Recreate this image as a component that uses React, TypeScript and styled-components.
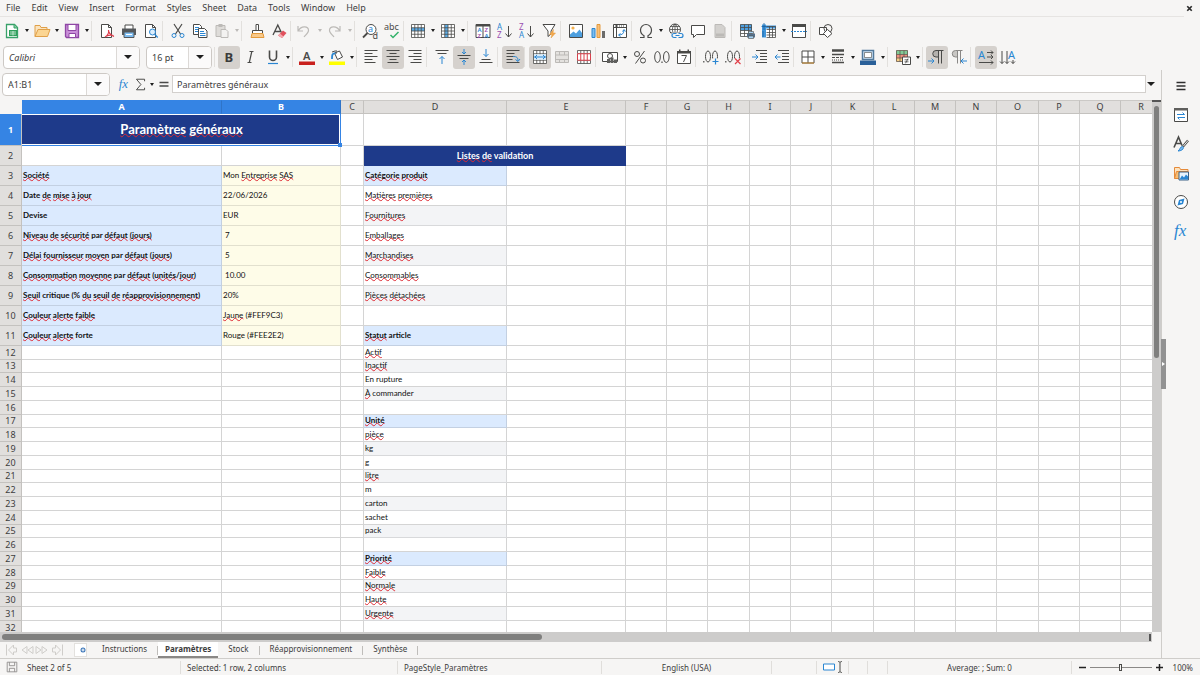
import React from 'react';
import styled, { createGlobalStyle, css } from 'styled-components';

const ui = '"Noto Sans", "Open Sans", sans-serif';
const cellFont = 'Lato, "Open Sans", sans-serif';
const ink = '#3d3d3d';
const blue = '#3584e4';
const navy = '#1e3a8a';

const Global = createGlobalStyle`
  *, *::before, *::after { box-sizing: border-box; }
  body { margin: 0; font-family: ${ui}; font-size: 9px; color: ${ink}; background: #f6f5f4; }
  button, input { font: inherit; color: inherit; margin: 0; }
  button { border: 0; padding: 0; background: none; }
`;

/* ---------- icons ---------- */

const g = '#4a4a48';
const b = '#2a86d2';
const p = '#9a4fb0';
const o = '#e39a3c';
const off = '#bcbab7';

const Svg = styled.svg`
  display: block;
  flex: none;
  fill: none;
  overflow: visible;
`;

const grid = (c: string) => <path d="M1.500 1.500h13v13h-13zM1.500 4.750h13M1.500 8h13M1.500 11.250h13M4.750 1.500v13M8 1.500v13M11.250 1.500v13" stroke={c} strokeWidth=".8" />;

const icons: Record<string, React.ReactNode> = {
  new: <><path d="M2.500 1.500h8l3 3v10h-11z" stroke="#38a169" fill="#fff" strokeWidth="1.300" /><path d="M10 1.500v3.500h3.500" stroke="#38a169" fill="#7fd09c" /><path d="M5 7h8v6H5z" fill="#2f9e5b" /><path d="M6 9h6M6 11h6M9 8v4.500" stroke="#d6f1e0" strokeWidth=".8" /></>,
  open: <><path d="M1 13.500V2.500h5l1 2h6v2" fill="#fbe3bd" stroke="#e0a049" /><path d="M1 13.500l3-7h12l-2.500 7z" fill="#fbd592" stroke="#e0a049" /></>,
  save: <><path d="M1.500 1.500h13v13h-12l-1-1z" fill="#c98fd8" stroke="#8f47a5" strokeWidth="1.300" /><path d="M4 1.500h8v6H4z" fill="#fff" stroke="#8f47a5" /><path d="M5 10.500h6.500v4H5z" fill="#fff" stroke="#8f47a5" /></>,
  pdf: <><path d="M2.500 1.500h7l3 3v10h-10z" fill="#fff" stroke={g} /><path d="M9.500 1.500v3h3" stroke={g} /><path d="M6 14c3-2 4-5 3.500-7M9.500 7c0 3 2 5 5.500 6.500M6.500 13.500c3-1.500 5-2 8-1" stroke="#dd3b4a" strokeWidth="1.200" /></>,
  print: <><path d="M4 6V2h8v4" fill="#fff" stroke={g} /><path d="M1 5.500h14v6.500H1z" fill="#55585b" /><path d="M3 9h10v5.500H3z" fill="#7fbdf0" stroke="#55585b" /><path d="M5 11.500h6" stroke="#fff" /></>,
  preview: <><path d="M2.500 1.500h7l3 3v10h-10z" fill="#fff" stroke={g} /><path d="M9.500 1.500v3h3" stroke={g} /><circle cx="9.500" cy="9" r="3" fill="#dceefc" stroke={b} /><path d="M11.700 11.300l3 3.200" stroke={b} strokeWidth="1.300" /></>,
  cut: <><path d="M4 1l6.500 10M12 1L5.500 11" stroke={g} strokeWidth="1.200" /><circle cx="4" cy="12.500" r="2" stroke={b} /><circle cx="12" cy="12.500" r="2" stroke={b} /></>,
  copy: <><path d="M1.500 1.500h6l2 2v8h-8z" fill="#fff" stroke={g} /><path d="M3 4.500h4M3 6.500h4M3 8.500h3" stroke={b} /><path d="M6.500 5.500h6l2.500 2.500v6.500H6.500z" fill="#fff" stroke={g} /><path d="M8 8.500h4M8 10.500h5.500M8 12.500h5.500" stroke={b} /></>,
  paste: <><path d="M2 2.500h9v11H2z" fill="#dedcd9" stroke={off} /><path d="M4.500 1h4v3h-4z" fill={off} /><path d="M7 6.500h5l2 2v6H7z" fill="#f3f2f1" stroke={off} /></>,
  clone: <><path d="M7 7.500V1.500h2.500v6" stroke={g} fill="#fff" /><path d="M3.500 10.500V7.500h10v3z" stroke={g} fill="#fff" /><path d="M3 10.500h11l1 4H2z" fill="#f8c98a" stroke={o} /></>,
  clear: <><path d="M2 12L6.800 2l3.600 7.500M3.800 8.500h6" stroke={g} strokeWidth="1.300" /><path d="M7 12.500l5-5 3.500 2.500-4.500 5z" fill="#e0505c" /><path d="M7 12.500l2-2 3.500 3-1.500 1.500z" fill="#f4a6ac" /></>,
  undo: <path d="M1 3v5h5M1.500 7.500C4 3 11 2.500 11.500 7c.3 2.500-2.500 4.500-4.500 7" stroke={off} strokeWidth="1.200" />,
  redo: <path d="M13 3v5H8M12.500 7.500C10 3 3 2.500 2.500 7c-.3 2.500 2.500 4.500 4.500 7" stroke={off} strokeWidth="1.200" />,
  find: <><circle cx="9" cy="6.500" r="5" stroke={g} fill="#fff" /><path d="M5.500 10L1 14.500" stroke={g} strokeWidth="1.800" /><text x="6" y="9" fontSize="9" fill={b} fontFamily="Noto Sans">a</text><text x="10.500" y="15.500" fontSize="9" fill={g} fontFamily="Noto Sans">d</text></>,
  spell: <><text x="0" y="7" fontSize="9" fill={g} fontFamily="Noto Sans">abc</text><path d="M6.500 12l2.500 2.500 5.500-5.500" stroke="#34b36b" strokeWidth="1.500" /></>,
  row: <><path d="M1 1.500h14v13H1z" fill="#fff" /><path d="M1 4.750h14V8H1z" fill="#5eaee8" />{grid(g)}</>,
  col: <><path d="M1 1.500h14v13H1z" fill="#fff" /><path d="M4.750 1.500H8v13H4.750z" fill="#5eaee8" />{grid(g)}</>,
  sort: <><path d="M1 1.500h14v13H1zM8 1.500v13" fill="#fff" stroke={g} /><path d="M1 1h14v2.500H1z" fill={g} /><g fontFamily="Noto Sans" fontSize="6" fontWeight="600"><text x="2.500" y="9" fill={b}>A</text><text x="2.500" y="14.500" fill={p}>Z</text><text x="9.500" y="9" fill={p}>Z</text><text x="9.500" y="14.500" fill={b}>A</text></g></>,
  asc: <><g fontFamily="Noto Sans" fontSize="8"><text x="0" y="6.500" fill={b}>A</text><text x="0" y="15" fill={p}>Z</text></g><path d="M11.500 3v11M8.500 10.500l3 3.500 3-3.500" stroke={g} /></>,
  desc: <><g fontFamily="Noto Sans" fontSize="8"><text x="0" y="6.500" fill={p}>Z</text><text x="0" y="15" fill={b}>A</text></g><path d="M11.500 3v11M8.500 10.500l3 3.500 3-3.500" stroke={g} /></>,
  filter: <><path d="M2 1.500h12L10 8v3l-3 2.500V8z" fill="#fff" stroke={g} /><path d="M12.500 6.500l-4 5h2.500l-1 3.500 4.500-5h-2.500z" fill="#f3a84d" stroke={o} strokeWidth=".5" /></>,
  image: <><path d="M1.500 1.500h13v13h-13z" fill="#fff" stroke={g} /><circle cx="5" cy="5" r="1.600" fill="#f3b04d" /><path d="M2 14v-2.500l3.500-3 2.500 2 3.500-4L14 10v4z" fill="#4d9fdf" /></>,
  chart: <><path d="M2 5.500h3v9H2z" fill="#7dbdee" stroke={b} /><path d="M7 1.500h3v13H7z" fill="#f9c07a" stroke={o} /><path d="M12 8h3v7h-3z" fill="#6b6b69" /></>,
  pivot: <><path d="M1.500 1.500h13v13h-13zM1.500 4.500h13M4.500 1.500v13" fill="#fff" stroke={g} /><path d="M3 3h10" stroke={g} strokeDasharray="1 1" /><path d="M7 12c3 0 5-1.500 5-5M10.500 8.500L12 6.500l1.500 2M8.500 10.500L6.500 12l2 1.500" stroke={b} /></>,
  omega: <path d="M2 14.500h4v-1.800C3.800 11.500 2.500 9.500 2.500 7a5.500 5.500 0 0 1 11 0c0 2.500-1.300 4.500-3.500 5.700v1.800h4" stroke={g} strokeWidth="1.200" />,
  link: <><circle cx="7" cy="6.500" r="5.500" fill="#fff" stroke={g} /><path d="M1.500 6.500h11M7 1v11M2.500 3.500h9M2.500 9.500h9M7 1c-3.500 3-3.500 8 0 11M7 1c3.500 3 3.500 8 0 11" stroke={g} strokeWidth=".8" /><path d="M3.500 9.500h12v6h-12z" fill="#f6f5f4" /><path d="M8.500 14.500H6a2 2 0 0 1 0-4h2.500M10.500 10.500H13a2 2 0 0 1 0 4h-2.500M7.500 12.500h4" stroke={b} strokeWidth="1.200" /></>,
  comment: <path d="M1.500 2.500h13v9h-8l-3 3v-3h-2z" fill="#fff" stroke={g} />,
  header: <><path d="M3 1.500h7l3 3v10H3z" fill="#d3d1ce" stroke={off} /><path d="M4 10.500h8v3H4z" fill={off} /></>,
  printArea: <><path d="M1 1.500h12v13H1z" fill="#fff" /><path d="M1 1.500h12v6H1z" fill="#4d9fdf" /><path d="M1.500 1.500h11v12h-11zM1.500 4.500h11M1.500 7.500h11M1.500 10.500h11M5.500 1.500v12M9.500 1.500v12" stroke={g} strokeWidth=".8" /><path d="M8 10.500h8v4H8z" fill="#55708a" /><path d="M9.500 8.500h5v2h-5zM9.500 13h5v2.500h-5z" fill="#a5d2f4" stroke={g} strokeWidth=".6" /></>,
  freeze: <><path d="M1 3.500h14v11H1z" fill="#fff" /><path d="M1 1.500h4v13H1zM5 2.500h10v3H5z" fill="#3f95da" /><path d="M5.500 3.500h9v11h-9M5.500 6.500h9M5.500 9.500h9M5.500 12h9M8.500 3.500v11M11.500 3.500v11" stroke={g} strokeWidth=".8" /><path d="M3 0v7M.5 3.500h5M2 8v6" stroke="#1c5f9c" strokeWidth=".8" /></>,
  split: <><path d="M1.500 1.500h13v13h-13z" fill="#fff" stroke={g} /><path d="M1 1h14v3H1z" fill={g} /><path d="M0 8.500h16" stroke={b} strokeDasharray="2 1" /></>,
  shapes: <><path d="M1.500 4.500h7v7h-7z" fill="#fff" stroke={g} /><circle cx="10" cy="5.500" r="4" stroke={g} /><path d="M9.500 6.500l4.500 4-4.500 4-4-4z" fill="#fff" stroke={g} /></>,
  bold: <text x="3.500" y="13" fontSize="13" fontWeight="700" fill="#3b3b3a" fontFamily="Noto Sans">B</text>,
  italic: <path d="M6.500 2.500h4M4.500 13.500h4M8.800 2.500L6.300 13.500" stroke={g} strokeWidth="1.200" />,
  underline: <><path d="M4.500 1.500V8a3.500 3.500 0 0 0 7 0V1.500" stroke={g} strokeWidth="1.600" /><path d="M3 14.500h10" stroke={b} strokeWidth="1.200" /></>,
  fontColor: <><text x="4" y="10.500" fontSize="11" fontWeight="600" fill={g} fontFamily="Noto Sans">A</text><path d="M0 12.500h16V16H0z" fill="#c9211e" /></>,
  highlight: <><path d="M5.500 4l5-2 3 6-5 2.500z" fill="#fff" stroke={g} /><path d="M7 1v4M3 3l3-1" stroke={g} /><path d="M3 10c0-4 0-6 3.500-5.500" stroke={b} strokeWidth="1.800" /><path d="M0 12.500h16V16H0z" fill="#ffff00" /></>,
  left: <path d="M1.500 1.500h13M1.500 4.500h8M1.500 7.500h13M1.500 10.500h8M1.500 13.500h11" stroke={g} />,
  center: <path d="M1.500 1.500h13M4.500 4.500h7M1.500 7.500h13M4.500 10.500h7M2.500 13.500h11" stroke={g} />,
  right: <path d="M1.500 1.500h13M6.500 4.500h8M1.500 7.500h13M6.500 10.500h8M3.500 13.500h11" stroke={g} />,
  top: <><path d="M1.500 1.500h13M3.500 4.500h9" stroke={g} /><path d="M8 15V7.500M5.500 10L8 7.500l2.500 2.500" stroke={b} /></>,
  middle: <><path d="M1.500 6.500h13M3.500 9.500h9" stroke={g} /><path d="M8 0v5M6 3l2 2 2-2M8 16v-5M6 13l2-2 2 2" stroke={b} /></>,
  bottom: <><path d="M3.500 10.500h9M1.500 13.500h13" stroke={g} /><path d="M8 0v7.500M5.500 5L8 7.500 10.500 5" stroke={b} /></>,
  wrap: <><path d="M1.500 1.500h13M1.500 4.500h8M1.500 7.500h8M1.500 10.500h6M1.500 13.500h13" stroke={g} /><path d="M8 7.500c4 0 5 1 5 4.500M10.500 10.500l2.500 2 2-2.500" stroke={b} /></>,
  merge: <><path d="M1 1.500h14v13H1z" fill="#fff" />{grid(g)}<path d="M2 5.200h12v5.600H2z" fill="#d9ecfa" /><path d="M2 8h12M5 6L3 8l2 2M11 6l2 2-2 2" stroke={b} /></>,
  mergeOff: <><path d="M1.500 2.500h13v11h-13zM1.500 6h13M1.500 10.500h13M5.500 2.500V6M10.500 2.500V6M5.500 10.500v3M10.500 10.500v3" fill="#e4e2df" stroke={off} /></>,
  unmerge: <><path d="M1 1.500h14v13H1z" fill="#fff" />{grid(g)}<path d="M1 4.750h14v6.500H1z" fill="#fff" /><path d="M1.500 4.750h13v6.500h-13zM4.750 4.750v6.500M8 4.750v6.500M11.250 4.750v6.500" stroke="#d8424d" /></>,
  currency: <><path d="M.5 3.500h15v9H.5z" fill="#fff" stroke={g} /><circle cx="8" cy="7" r="2.500" stroke={g} /><path d="M5 10h3v4H5zM8.500 8.500h3V14h-3zM12 10.500h3V14h-3z" fill="#5f5f5d" /></>,
  percent: <><circle cx="5" cy="5" r="2.500" stroke={g} /><circle cx="11" cy="11.500" r="2.500" stroke={g} /><path d="M12.500 2L3.500 14.500" stroke={g} /></>,
  number: <><ellipse cx="3.500" cy="8" rx="2.800" ry="5.500" stroke={g} /><ellipse cx="12.300" cy="8" rx="2.800" ry="5.500" stroke={g} /><path d="M8 12.500v1.500" stroke={g} strokeWidth="1.200" /></>,
  date: <><path d="M1.500 2.500h13v12h-13z" fill="#fff" stroke={g} /><path d="M1 2h14v2.500H1zM3 .5h1.500v2H3zM11.500.5H13v2h-1.500z" fill={g} /><path d="M5.500 6.500h5l-3 6.500" stroke={g} /></>,
  addDec: <><path d="M.8 12v1.500" stroke={g} strokeWidth="1.200" /><ellipse cx="5" cy="7.500" rx="2.500" ry="5.500" stroke={g} /><ellipse cx="12" cy="7.500" rx="2.500" ry="5.500" stroke={g} /><path d="M9 9.500h8v6H9z" fill="#f6f5f4" /><path d="M12.500 9.500v6M9.500 12.500h6" stroke={b} strokeWidth="1.200" /></>,
  delDec: <><path d="M.8 12v1.500" stroke={g} strokeWidth="1.200" /><ellipse cx="5" cy="7.500" rx="2.500" ry="5.500" stroke={g} /><ellipse cx="12" cy="7.500" rx="2.500" ry="5.500" stroke={g} /><path d="M9 9.500h8v6H9z" fill="#f6f5f4" /><path d="M10 9.500l5.500 5.500M15.500 9.500L10 15" stroke="#e0404a" strokeWidth="1.200" /></>,
  indent: <><path d="M4 1.500h11M8 4.500h7M8 7.500h7M8 10.500h7M4 13.500h11" stroke={g} /><path d="M0 8h5.500M3.500 5.500L6 8l-2.500 2.500" stroke={b} /></>,
  outdent: <><path d="M4 1.500h11M8 4.500h7M8 7.500h7M8 10.500h7M4 13.500h11" stroke={g} /><path d="M6.500 8H1M3.500 5.500L1 8l2.500 2.500" stroke={b} /></>,
  borders: <><path d="M2 2h12v12H2z" fill="#fff" stroke={g} /><path d="M8 2v12M2 8h12" stroke={g} /><path d="M2 14h12" stroke="#c98a2b" /></>,
  lineStyle: <><path d="M2 1.500h12" stroke={g} strokeWidth="2.500" /><path d="M2 5.500h12" stroke={g} strokeWidth="1.500" /><path d="M2 8.500h12" stroke={g} strokeDasharray="3 1" /><path d="M2 11h12" stroke={g} strokeDasharray="1 1" /><path d="M2 13.500h12" stroke={g} strokeWidth="1.500" /></>,
  borderColor: <><path d="M2.500 1.500h11v9h-11z" fill="#cfe5f8" stroke="#51799b" strokeWidth="1.500" /><path d="M4.500 3.500h7v5h-7z" fill="#fff" stroke={g} strokeWidth=".6" /><path d="M0 11.500h16v4.500H0z" fill="#2a6099" /></>,
  conditional: <><path d="M1 1.500h12v4H1z" fill="#7fcb96" /><path d="M1 5.500h12v3.500H1z" fill="#ef8f7f" /><path d="M1 9h12v3.500H1z" fill="#f7cf86" /><path d="M1.500 1.500h11v11h-11zM1.500 5.500h11M1.500 9h11M5 1.500v11M9 1.500v11" stroke="#66594f" strokeWidth=".8" /><path d="M7.500 8h8v7.500h-8z" fill="#fff" stroke={g} /><path d="M9.500 10.800h4M9.500 12.800h4M13 9.500l-2.500 4.800" stroke={g} strokeWidth=".8" /></>,
  ltr: <><path d="M9.500 1.500v13M12.500 1.500v13" stroke={g} /><path d="M9.500 1.500H7a3 3 0 0 0 0 6.500h2.500z" fill="#b5b2ae" stroke={g} /><path d="M9 1.500h5.500" stroke={g} /><path d="M-1 12h5.500M2.500 9.500L5 12l-2.500 2.500" stroke={b} /></>,
  rtl: <><path d="M6.500 1.500v13M9.500 1.500v13M6 1.500h5.500" stroke="#8a8886" /><path d="M6.500 1.500H4.500a3 3 0 0 0 0 6.500h2z" fill="#c9c7c4" stroke="#8a8886" /><path d="M16 12h-5.500M12.500 9.500L10 12l2.500 2.500" stroke={b} /></>,
  dirH: <><text x="0" y="10" fontSize="11" fill={b} fontFamily="Noto Sans">A</text><path d="M9 3.500h6M9 8h6M1 13.500h14M13 1.500l2 2-2 2M13 6l2 2-2 2M13 11.500l2 2-2 2" stroke={g} /></>,
  dirV: <><text x="8" y="10" fontSize="11" fill={b} fontFamily="Noto Sans">A</text><path d="M2 2v12.500M7 2v12.500M13 11v3.500M0 12.500l2 2 2-2M5 12.500l2 2 2-2M11 12.500l2 2 2-2" stroke={g} /></>,
  fx: <text x="1" y="13" fontSize="17" fontStyle="italic" fill={b} fontFamily="Liberation Serif">fx</text>,
  sum: <path d="M13 4V1.500H3L8.500 8 3 14.500h10V12" stroke={g} strokeWidth="1.200" />,
  equals: <path d="M3.500 6.500h9M3.500 10h9" stroke={g} strokeWidth="1.500" />,
  menu: <path d="M3.500 4.500h9M3.500 8h9M3.500 11.500h9" stroke="#2e2e2e" strokeWidth="1.300" />,
  props: <><path d="M1.500 1.500h13v13h-13z" fill="#fff" stroke={g} /><path d="M1 1h14v2.500H1z" fill="#5f5f5d" /><path d="M4 7.500h7.500M5 10.500H12M9.500 5.500l2 2M6.500 12.500l-2-2" stroke={b} /></>,
  styles: <><path d="M1 11.500L5.500 1 9 9.500M2.500 7.500H8" stroke={g} strokeWidth="1.600" /><path d="M15 4.500l-5 6" stroke={g} strokeWidth="2.400" /><path d="M15 4.500l-4.500 5.500" stroke="#fff" strokeWidth=".9" /><path d="M5 15c2-1 2-4.500 4.500-4.500C12 12 9 15 5 15z" fill="#7fbcf0" stroke={b} /></>,
  gallery: <><path d="M1.500 13.500V2.500h5l1 2h7.500v3" fill="#fde2bd" stroke="#e58a3a" /><path d="M1.500 13.500l2-7H15v7z" fill="#f8bd73" stroke="#e58a3a" /><path d="M6 7h9.500v8H6z" fill="#e8f4fd" stroke="#3c6385" /><path d="M6.500 14.500l2.500-4 2 2 2-3 2 2v3z" fill={b} /></>,
  navigator: <><circle cx="8" cy="8" r="6.500" fill="#fff" stroke={g} /><path d="M11.500 4.500l-1.500 5.500-5.500 1.500L6 6z" fill={b} /><circle cx="8" cy="8" r="1" fill="#fff" /></>,
  docSave: <path d="M2.500 2.500h11v11h-11zM5 2.500v4h6v-4M5 13.500v-4h6v4" stroke="#8e8c8a" />,
  close: <path d="M4 4l8 8M12 4l-8 8" stroke="#2b2b2b" strokeWidth="3" />,
};

const Icon = ({ name, size = 16 }: { name: string; size?: number }) => (
  <Svg width={size} height={size} viewBox="0 0 16 16" aria-hidden="true">{icons[name]}</Svg>
);

const Caret = styled.span<{ $big?: boolean; $off?: boolean }>`
  width: 0;
  height: 0;
  border: solid transparent;
  border-width: ${({ $big }) => ($big ? '4px 4px 0' : '3px 2px 0')};
  border-top-color: ${({ $off }) => ($off ? off : '#1f1f1f')};
`;

/* ---------- window chrome ---------- */

const Window = styled.div`
  display: flex;
  flex-direction: column;
  height: 100vh;
  overflow: hidden;
`;

const MenuBar = styled.nav`
  display: flex;
  align-items: center;
  gap: 11px;
  height: 17px;
  flex: none;
  margin-right: 16px;
  padding-left: 6px;
  border-bottom: 1px solid #e6e4e2;
`;

const MenuItem = styled.button`
  line-height: 16px;
`;

const CloseButton = styled.button`
  position: absolute;
  top: 4px;
  right: 6px;
`;

const ToolBar = styled.div<{ $format?: boolean }>`
  display: flex;
  align-items: center;
  height: ${({ $format }) => ($format ? '26px' : '27px')};
  flex: none;
  padding-left: ${({ $format }) => ($format ? '3px' : '1px')};
`;

const FontFields = styled.div`
  display: flex;
  gap: 6px;
  margin-right: 2px;
`;

const Tool = styled.button<{ $on?: boolean }>`
  display: flex;
  align-items: center;
  justify-content: center;
  width: 22px;
  height: 23px;
  flex: none;
  border-radius: 3px;
  background: ${({ $on }) => ($on ? '#d5d1cd' : 'transparent')};
`;

const Arrow = styled.button`
  display: flex;
  align-items: center;
  justify-content: center;
  width: 8px;
  height: 23px;
  flex: none;
`;

const Separator = styled.span<{ $tight?: boolean }>`
  width: ${({ $tight }) => ($tight ? '4px' : '5px')};
  height: 20px;
  flex: none;
  border-left: 1px solid #e2e0dd;
`;

const Combo = styled.div<{ $width: number; $italic?: boolean }>`
  display: flex;
  flex: none;
  width: ${({ $width }) => $width}px;
  height: 23px;
  border: 1px solid #cdc9c5;
  border-radius: 4px;
  background: #fff;
  overflow: hidden;
  input {
    flex: 1;
    min-width: 0;
    border: 0;
    padding: 0 5px;
    background: transparent;
    outline: 0;
    font-style: ${({ $italic }) => ($italic ? 'italic' : 'normal')};
  }
  button {
    display: flex;
    align-items: center;
    justify-content: center;
    width: 23px;
    border-left: 1px solid #dcd9d6;
    background: #fbfafa;
  }
`;

const Body = styled.div`
  display: flex;
  flex: 1;
  min-height: 0;
`;

const Main = styled.main`
  display: flex;
  flex-direction: column;
  flex: 1;
  min-width: 0;
`;

const FormulaBar = styled.div`
  display: flex;
  align-items: center;
  flex: none;
  height: 30px;
  padding: 0 5px 2px 2px;
`;

const FormulaTools = styled.div`
  display: flex;
  margin-left: 6px;
`;

const FormulaInput = styled.input`
  flex: 1;
  min-width: 0;
  height: 18px;
  padding: 0 4px;
  border: 1px solid #d3d0cd;
  background: #fff;
  outline: 0;
`;

const FormulaTool = styled(Tool)`
  width: 16px;
`;

const FormulaExpand = styled(Arrow)`
  width: 10px;
`;

const SideBar = styled.aside`
  position: relative;
  display: flex;
  flex-direction: column;
  align-items: center;
  gap: 6px;
  width: 39px;
  flex: none;
  padding-top: 4px;
  border-left: 1px solid #cfcdca;
`;

const SideHandle = styled.button`
  position: absolute;
  top: 50%;
  left: -1px;
  display: flex;
  align-items: center;
  justify-content: center;
  width: 5px;
  height: 50px;
  margin-top: -25px;
  background: #929292;
  &::after {
    content: '';
    border: solid transparent;
    border-width: 2px 0 2px 3px;
    border-left-color: #fff;
  }
`;

/* ---------- sheet ---------- */

const SheetArea = styled.div`
  display: flex;
  flex: 1;
  min-height: 0;
`;

const SheetView = styled.div`
  flex: 1;
  min-width: 0;
  overflow: hidden;
  background: #fff;
`;

const Sheet = styled.table`
  table-layout: fixed;
  width: 0;
  border-collapse: separate;
  border-spacing: 0;
`;

const Corner = styled.td`
  background: #f6f5f4;
`;

const head = css<{ $on?: boolean }>`
  padding: 0;
  font-size: 9px;
  line-height: 12px;
  text-align: center;
  background: ${({ $on }) => ($on ? blue : '#e1dfdd')};
  color: ${({ $on }) => ($on ? '#fff' : ink)};
  font-weight: ${({ $on }) => ($on ? 700 : 400)};
`;

const ColHead = styled.th<{ $on?: boolean }>`
  ${head}
  height: 14px;
  border-right: 1px solid ${({ $on }) => ($on ? '#2f74c8' : '#c4c2bf')};
  border-top: 1px solid ${({ $on }) => ($on ? blue : '#cbc9c6')};
  border-bottom: 1px solid ${({ $on }) => ($on ? blue : '#c4c2bf')};
`;

const RowHead = styled.th<{ $on?: boolean }>`
  ${head}
  border-right: 1px solid #c4c2bf;
  border-bottom: 1px solid #c4c2bf;
`;

const SheetRow = styled.tr<{ $height: number }>`
  height: ${({ $height }) => $height}px;
`;

type Kind = 'plain' | 'label' | 'value' | 'stripe' | 'banner';
const fills: Record<Kind, string> = {
  plain: 'transparent', label: '#dbeafe', value: '#fefce8', stripe: '#f3f4f6', banner: navy,
};

const Cell = styled.td<{ $kind?: Kind }>`
  padding: 0 0 1px 1px;
  border: solid rgba(0, 0, 0, ${({ $kind = 'plain' }) => ($kind === 'plain' ? 0.17 : 0.11)});
  border-width: 0 1px 1px 0;
  background: ${({ $kind = 'plain' }) => fills[$kind]};
  font-family: ${cellFont};
  font-size: 8px;
  line-height: 11px;
  white-space: pre;
  color: #111;
  ${({ $kind }) => $kind === 'label' && 'font-weight: 700;'}
  ${({ $kind }) => $kind === 'banner' && `font-size: 9px; font-weight: 700; color: #fff; text-align: center; border-color: ${navy};`}
`;

const TitleCell = styled(Cell)`
  position: relative;
  font-size: 13px;
  line-height: 18px;
  border-right-color: ${blue};
  border-bottom-color: ${blue};
  &::before {
    content: '';
    position: absolute;
    inset: 0;
    border: 1px solid #fff;
    border-left: 0;
  }
  &::after {
    content: '';
    position: absolute;
    right: -2px;
    bottom: -2px;
    width: 4px;
    height: 4px;
    background: ${blue};
  }
`;

const Misspelt = styled.span`
  text-decoration: underline wavy #dd2a33 1px;
  text-underline-offset: -1px;
  text-decoration-skip-ink: none;
`;

const VScroll = styled.div`
  width: 9px;
  flex: none;
  padding: 4px 2px 0;
  border-top: 2px solid #555;
  background: #cdcccb;
`;

const VThumb = styled.div`
  height: 48%;
  border-radius: 3px;
  background: #7f7f7e;
`;

const HScroll = styled.div`
  display: flex;
  align-items: center;
  justify-content: space-between;
  height: 10px;
  flex: none;
  margin-right: 9px;
  padding: 0 1px 0 2px;
  background: #cdcccb;
`;

const HThumb = styled.div`
  width: 47%;
  height: 6px;
  border-radius: 3px;
  background: #7f7f7e;
`;

const HEnd = styled.div`
  width: 2px;
  height: 7px;
  background: #555;
`;

const TabBar = styled.div`
  display: flex;
  align-items: center;
  height: 16px;
  flex: none;
  padding-left: 5px;
  font-size: 8px;
`;

const TabNav = styled.button`
  display: flex;
  align-items: center;
  width: 15px;
  height: 14px;
`;

const AddSheet = styled.button`
  display: flex;
  align-items: center;
  justify-content: flex-end;
  width: 13px;
  height: 14px;
  margin: 0 5px 0 9px;
  border: 1px solid #e3e1de;
  background: #fff;
`;

const Tab = styled.button<{ $on?: boolean }>`
  height: 16px;
  padding: 0 ${({ $on }) => ($on ? '7px' : '10px')};
  line-height: 14px;
  background: ${({ $on }) => ($on ? '#fff' : 'transparent')};
  border-bottom: 2px solid ${({ $on }) => ($on ? '#8a8886' : 'transparent')};
  font-weight: ${({ $on }) => ($on ? 700 : 400)};
`;

const TabRule = styled.span`
  width: 1px;
  height: 9px;
  background: #bfbdba;
`;

const StatusBar = styled.footer`
  display: grid;
  grid-template-columns: 22px 158px 217px 204fr 170fr 45px 32px 19px 20px 184fr 129px;
  align-items: center;
  flex: none;
  height: 17px;
  border-top: 1px solid #cfcdca;
  font-size: 8px;
`;

const Status = styled.div<{ $center?: boolean; $first?: boolean }>`
  display: flex;
  align-items: center;
  height: 13px;
  padding-left: ${({ $center, $first }) => ($center ? 0 : $first ? '5px' : '6px')};
  border-left: ${({ $first }) => ($first ? '0' : '1px solid #e0dedb')};
  justify-content: ${({ $center }) => ($center ? 'center' : 'flex-start')};
  white-space: nowrap;
`;

const ZoomCell = styled(Status)`
  padding: 0 7px 0 6px;
  gap: 4px;
`;

const ZoomStep = styled.button`
  width: 8px;
  height: 12px;
  flex: none;
  svg { margin: auto; }
`;

const ZoomSlider = styled.input`
  appearance: none;
  flex: 1;
  min-width: 0;
  height: 12px;
  background: transparent;
  &::-webkit-slider-runnable-track { height: 1px; background: #8b8987; }
  &::-webkit-slider-thumb {
    appearance: none;
    width: 3px;
    height: 7px;
    margin-top: -3px;
    border: 1px solid #4a4a48;
    background: #f6f5f4;
  }
`;

const ZoomText = styled.span`
  margin-left: 5px;
`;

/* ---------- data ---------- */

const menus = ['File', 'Edit', 'View', 'Insert', 'Format', 'Styles', 'Sheet', 'Data', 'Tools', 'Window', 'Help'];

/* "name" is a button, "name>" has a drop-down, "*name" is pressed, "|" and "!" are wide and narrow separators. */
const standardTools = 'new> open> save> | pdf print preview | cut copy paste> | clone clear ! undo> redo> | find spell ! row> col> | sort asc desc filter | image chart pivot ! omega> link comment header | printArea freeze> split | shapes'.split(' ');
const formatTools = '! *bold italic underline> ! fontColor> highlight> ! left *center right | top *middle bottom | *wrap | *merge mergeOff unmerge ! currency> percent number date | addDec delDec | indent outdent ! borders> lineStyle> borderColor> | conditional> ! *ltr rtl | *dirH dirV'.split(' ');
const disabled = ['paste', 'undo', 'redo', 'header', 'mergeOff'];

const columns: [string, number][] = [
  ['A', 200], ['B', 119], ['C', 23], ['D', 143], ['E', 119], ['F', 41], ['G', 41], ['H', 42], ['I', 41],
  ['J', 41], ['K', 42], ['L', 41], ['M', 41], ['N', 41], ['O', 42], ['P', 41], ['Q', 41], ['R', 41],
];

const params: Record<number, [string, string]> = {
  3: ['[Société]', 'Mon [Entreprise] [SAS]'],
  4: ['Date [de] [mise] [à] [jour]', '22/06/2026'],
  5: ['Devise', 'EUR'],
  6: ['[Niveau] [de] [sécurité] par [défaut] [(jours)]', ' 7'],
  7: ['[Délai] [fournisseur] [moyen] par [défaut] ([jours])', ' 5'],
  8: ['[Consommation] [moyenne] par [défaut] ([unités]/[jour])', ' 10.00'],
  9: ['[Seuil] critique (% [du] [seuil] [de] [réapprovisionnement])', '20%'],
  10: ['[Couleur] [alerte] [faible]', '[Jaune] (#FEF9C3)'],
  11: ['[Couleur] [alerte] forte', 'Rouge (#FEE2E2)'],
};

const lists: Record<number, [string, Kind]> = {
  3: ['[Catégorie] [produit]', 'label'],
  4: ['[Matières] [premières]', 'plain'],
  5: ['[Fournitures]', 'stripe'],
  6: ['[Emballages]', 'plain'],
  7: ['[Marchandises]', 'stripe'],
  8: ['[Consommables]', 'plain'],
  9: ['[Pièces] [détachées]', 'stripe'],
  11: ['[Statut] article', 'label'],
  12: ['[Actif]', 'plain'],
  13: ['[Inactif]', 'stripe'],
  14: ['En rupture', 'plain'],
  15: ['[À] commander', 'stripe'],
  17: ['[Unité]', 'label'],
  18: ['[pièce]', 'plain'],
  19: ['kg', 'stripe'],
  20: ['g', 'plain'],
  21: ['[litre]', 'stripe'],
  22: ['m', 'plain'],
  23: ['carton', 'stripe'],
  24: ['sachet', 'plain'],
  25: ['pack', 'stripe'],
  27: ['[Priorité]', 'label'],
  28: ['[Faible]', 'plain'],
  29: ['[Normale]', 'stripe'],
  30: ['[Haute]', 'plain'],
  31: ['[Urgente]', 'stripe'],
};

const rowNumbers = Array.from({ length: 32 }, (_, i) => i + 1);
const rowHeight = (n: number) => (n === 1 ? 32 : n <= 11 ? 20 : n % 4 === 1 ? 13 : 14);

const tabs = ['Instructions', 'Paramètres', 'Stock', 'Réapprovisionnement', 'Synthèse'];

/* ---------- parts ---------- */

const Tools = ({ items }: { items: string[] }) => (
  <>
    {items.map((item, i) => {
      if (item === '|' || item === '!') return <Separator key={i} $tight={item === '!'} />;
      const name = item.replace(/[*>]/g, '');
      return (
        <React.Fragment key={i}>
          <Tool type="button" aria-label={name} $on={item.startsWith('*')}><Icon name={name} /></Tool>
          {item.endsWith('>') && (
            <Arrow type="button" aria-label={`${name} options`}><Caret $off={disabled.includes(name)} /></Arrow>
          )}
        </React.Fragment>
      );
    })}
  </>
);

const ComboBox = ({ label, value, width, italic }: { label: string; value: string; width: number; italic?: boolean }) => (
  <Combo $width={width} $italic={italic}>
    <input aria-label={label} defaultValue={value} />
    <button type="button" aria-label={`${label} list`}><Caret $big /></button>
  </Combo>
);

const Spelled = ({ text }: { text: string }) => (
  <>{text.split(/(\[[^\]]*\])/).map((part, i) => (part.startsWith('[') ? <Misspelt key={i}>{part.slice(1, -1)}</Misspelt> : part))}</>
);

const Row = ({ n }: { n: number }) => {
  const param = params[n];
  const list = lists[n];
  return (
    <SheetRow $height={rowHeight(n)}>
      <RowHead scope="row" $on={n === 1}>{n}</RowHead>
      {n === 1 ? (
        <TitleCell colSpan={2} $kind="banner"><Spelled text="[Paramètres] [généraux]" /></TitleCell>
      ) : (
        <>
          <Cell $kind={param ? 'label' : 'plain'}>{param && <Spelled text={param[0]} />}</Cell>
          <Cell $kind={param ? 'value' : 'plain'}>{param && <Spelled text={param[1]} />}</Cell>
        </>
      )}
      <Cell />
      {n === 2 ? (
        <Cell colSpan={2} $kind="banner"><Spelled text="[Listes] [de] validation" /></Cell>
      ) : (
        <>
          <Cell $kind={list ? list[1] : 'plain'}>{list && <Spelled text={list[0]} />}</Cell>
          <Cell />
        </>
      )}
      {columns.slice(5).map(([name]) => <Cell key={name} />)}
    </SheetRow>
  );
};

const tabNavs: [string, string][] = [
  ['First sheet', 'M1.500 1.500v11M3.500 7l5-5v3h3v4h-3v3z'],
  ['Previous sheet', 'M7 3.500L2 7l5 3.500zM13 3.500L8 7l5 3.500z'],
  ['Next sheet', 'M1 3.500L6 7l-5 3.500zM7 3.500L12 7l-5 3.500z'],
  ['Last sheet', 'M12.500 1.500v11M10.500 7l-5-5v3h-3v4h3v3z'],
];
const sideTools = ['menu', 'props', 'styles', 'gallery', 'navigator', 'fx'];

export default function App() {
  return (
    <Window>
      <Global />
      <MenuBar>
        {menus.map((m) => <MenuItem key={m} type="button">{m}</MenuItem>)}
        <CloseButton type="button" aria-label="Close document"><Icon name="close" size={9} /></CloseButton>
      </MenuBar>
      <ToolBar><Tools items={standardTools} /></ToolBar>
      <ToolBar $format>
        <FontFields>
          <ComboBox label="Font name" value="Calibri" width={137} italic />
          <ComboBox label="Font size" value="16 pt" width={66} />
        </FontFields>
        <Tools items={formatTools} />
      </ToolBar>
      <Body>
        <Main>
          <FormulaBar>
            <ComboBox label="Name box" value="A1:B1" width={108} />
            <FormulaTools>
              <FormulaTool type="button" aria-label="Function wizard"><Icon name="fx" size={12} /></FormulaTool>
              <FormulaTool type="button" aria-label="Select function"><Icon name="sum" size={13} /></FormulaTool>
              <Arrow type="button" aria-label="Function list"><Caret /></Arrow>
              <FormulaTool type="button" aria-label="Formula"><Icon name="equals" /></FormulaTool>
            </FormulaTools>
            <FormulaInput aria-label="Input line" defaultValue="Paramètres généraux" />
            <FormulaExpand type="button" aria-label="Expand formula bar"><Caret $big /></FormulaExpand>
          </FormulaBar>
          <SheetArea>
            <SheetView>
              <Sheet>
                <colgroup>
                  <col width={22} />
                  {columns.map(([name, width]) => <col key={name} width={width} />)}
                </colgroup>
                <thead>
                  <tr>
                    <Corner />
                    {columns.map(([name], i) => <ColHead key={name} scope="col" $on={i < 2}>{name}</ColHead>)}
                  </tr>
                </thead>
                <tbody>{rowNumbers.map((n) => <Row key={n} n={n} />)}</tbody>
              </Sheet>
            </SheetView>
            <VScroll><VThumb /></VScroll>
          </SheetArea>
          <HScroll><HThumb /><HEnd /></HScroll>
          <TabBar>
            {tabNavs.map(([label, d]) => (
              <TabNav key={label} type="button" aria-label={label}>
                <Svg width="14" height="14" viewBox="0 0 14 14"><path d={d} stroke="#cfcdca" /></Svg>
              </TabNav>
            ))}
            <AddSheet type="button" aria-label="Add sheet">
              <Svg width="6" height="6" viewBox="0 0 6 6"><circle cx="3" cy="3" r="2.500" fill="#3b76b8" /><path d="M3 1.500v3M1.500 3h3" stroke="#fff" /></Svg>
            </AddSheet>
            {tabs.map((t, i) => (
              <React.Fragment key={t}>
                <Tab type="button" $on={i === 1}>{t}</Tab>
                {i !== 1 && <TabRule />}
              </React.Fragment>
            ))}
          </TabBar>
        </Main>
        <SideBar>
          {sideTools.map((name) => <Tool key={name} type="button" aria-label={name}><Icon name={name} /></Tool>)}
          <SideHandle type="button" aria-label="Hide sidebar" />
        </SideBar>
      </Body>
      <StatusBar>
        <Status $first><Icon name="docSave" size={14} /></Status>
        <Status $first>Sheet 2 of 5</Status>
        <Status>Selected: 1 row, 2 columns</Status>
        <Status>PageStyle_Paramètres</Status>
        <Status $center>English (USA)</Status>
        <Status />
        <Status>
          <Svg width="20" height="12" viewBox="0 0 20 12"><path d="M.5 3h11v6H.5z" stroke={b} fill="#fff" /><path d="M17 1.500v9M15 .5c1 0 2 .5 2 1 0-.5 1-1 2-1M15 11.500c1 0 2-.5 2-1 0 .5 1 1 2 1" stroke={g} /></Svg>
        </Status>
        <Status />
        <Status />
        <Status $center>Average: ; Sum: 0</Status>
        <ZoomCell>
          <ZoomStep type="button" aria-label="Zoom out"><Svg width="7" height="7" viewBox="0 0 7 7"><path d="M0 3.500h7" stroke="#222" strokeWidth="1.500" /></Svg></ZoomStep>
          <ZoomSlider type="range" aria-label="Zoom" defaultValue={50} />
          <ZoomStep type="button" aria-label="Zoom in"><Svg width="7" height="7" viewBox="0 0 7 7"><path d="M0 3.500h7M3.500 0v7" stroke="#222" strokeWidth="1.500" /></Svg></ZoomStep>
          <ZoomText>100%</ZoomText>
        </ZoomCell>
      </StatusBar>
    </Window>
  );
}
